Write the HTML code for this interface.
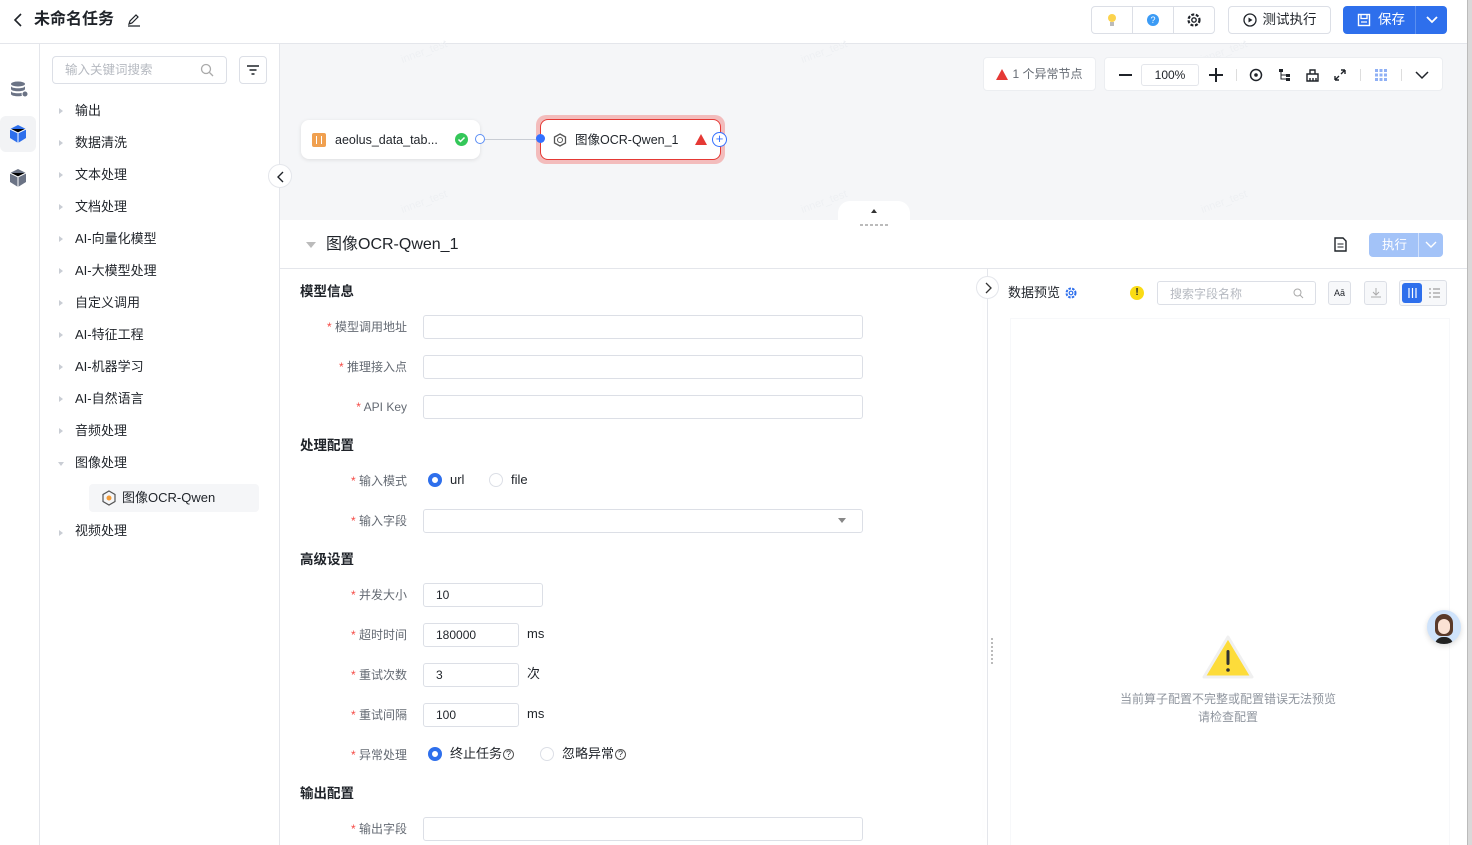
<!DOCTYPE html>
<html><head><meta charset="utf-8"><style>
*{box-sizing:border-box;margin:0;padding:0}
body{width:1472px;height:845px;overflow:hidden;font-family:"Liberation Sans","Noto Sans CJK SC",sans-serif;color:#1f2329;background:#fff;position:relative;font-size:13px;line-height:16px}
.abs{position:absolute}
.hdr{left:0;top:0;width:1467px;height:44px;border-bottom:1px solid #e4e6eb;background:#fff}
.btn{position:absolute;border:1px solid #dcdfe6;border-radius:4px;background:#fff;display:flex;align-items:center;justify-content:center}
.rail{left:0;top:44px;width:40px;height:801px;border-right:1px solid #e4e6eb;background:#fff}
.side{left:40px;top:44px;width:240px;height:801px;border-right:1px solid #e4e6eb;background:#fff}
.tree{position:absolute;left:35px;font-size:13px;color:#1f2329}
.tri{position:absolute;left:19px;width:0;height:0;border-top:3.5px solid transparent;border-bottom:3.5px solid transparent;border-left:4px solid #c9cdd4}
.canvas{left:280px;top:44px;width:1187px;height:176px;background:#f5f6f8}
.node{position:absolute;background:#fff;border-radius:8px;box-shadow:0 1px 4px rgba(0,0,0,.1);display:flex;align-items:center;font-size:12.5px}
.lbl{position:absolute;width:120px;text-align:right;font-size:12px;color:#646a73}
.lbl:before{content:"* ";color:#f54a45}
.inp{position:absolute;border:1px solid #dcdfe6;border-radius:3px;height:24px;font-size:12px;padding-left:12px;line-height:22px;background:#fff}
.sec{position:absolute;left:300px;font-weight:bold;font-size:13.5px}
.radio{position:absolute;width:14px;height:14px;border-radius:50%;border:1px solid #dcdfe6;background:#fff}
.radio.on{border:4px solid #2e6fec}
.wm{position:absolute;color:#eef0f3;font-size:11px;transform:rotate(-20deg)}
</style></head><body>

<div class="abs hdr">
  <svg class="abs" style="left:12px;top:12px" width="12" height="16"><path d="M9 2L3 8l6 6" stroke="#1f2329" stroke-width="1.6" fill="none"/></svg>
  <div class="abs" style="left:34px;top:11px;font-size:16px;font-weight:bold;line-height:18px">未命名任务</div>
  <svg class="abs" style="left:126px;top:12px" width="16" height="16"><path d="M3 12l1-3 6-6 2 2-6 6z M2 14h12" stroke="#1f2329" stroke-width="1.2" fill="none"/></svg>
  <div class="btn" style="left:1091px;top:6px;width:124px;height:28px;justify-content:flex-start">
    <div style="width:41px;height:26px;border-right:1px solid #dcdfe6;display:flex;align-items:center;justify-content:center"><svg width="12" height="14"><circle cx="6" cy="5" r="4" fill="#fcd34d"/><rect x="4" y="9" width="4" height="4" fill="#bbb"/></svg></div>
    <div style="width:41px;height:26px;border-right:1px solid #dcdfe6;display:flex;align-items:center;justify-content:center"><div style="width:12px;height:12px;border-radius:50%;background:#3b9bf5;color:#fff;font-size:9px;text-align:center;line-height:12px">?</div></div>
    <div style="width:40px;height:26px;display:flex;align-items:center;justify-content:center"><svg width="16" height="16"><circle cx="8" cy="8" r="5.5" stroke="#1f2329" stroke-width="2.2" fill="none" stroke-dasharray="3 1.6"/><circle cx="8" cy="8" r="2.2" stroke="#1f2329" stroke-width="1.4" fill="none"/></svg></div>
  </div>
  <div class="btn" style="left:1228px;top:6px;width:103px;height:28px;font-size:13.5px"><svg width="14" height="14" style="margin-right:6px"><circle cx="7" cy="7" r="6" stroke="#1f2329" stroke-width="1.3" fill="none"/><path d="M5.5 4.5v5l4-2.5z" fill="#1f2329"/></svg>测试执行</div>
  <div class="abs" style="left:1343px;top:6px;width:104px;height:28px;background:#2e6fec;border-radius:4px;color:#fff;font-size:13.5px">
    <svg class="abs" style="left:14px;top:7px" width="14" height="14"><rect x="1.5" y="1.5" width="11" height="11" stroke="#fff" stroke-width="1.4" fill="none"/><path d="M4 1.5v4h6v-4M4 9h6" stroke="#fff" stroke-width="1.3" fill="none"/></svg>
    <span class="abs" style="left:35px;top:6px">保存</span>
    <div class="abs" style="left:72px;top:0;width:1px;height:28px;background:#5a8ff0"></div>
    <svg class="abs" style="left:82px;top:9px" width="14" height="10"><path d="M2 2l5 5 5-5" stroke="#fff" stroke-width="1.8" fill="none"/></svg>
  </div>
</div>
<div class="abs" style="left:1467px;top:0;width:5px;height:845px;background:#d9d9d9;border-left:1px solid #bbb"></div>

<div class="abs rail">
  <svg class="abs" style="left:10px;top:36px" width="18" height="18"><ellipse cx="8" cy="4" rx="7" ry="2.5" fill="#6b7385"/><path d="M1 6c0 3 14 3 14 0v3c0 3-14 3-14 0zM1 11c0 3 14 3 14 0v3c0 3-14 3-14 0z" fill="#6b7385"/><circle cx="15" cy="14" r="3" fill="#6b7385" stroke="#fff"/></svg>
  <div class="abs" style="left:0;top:72px;width:36px;height:36px;background:#f2f3f5;border-radius:6px"></div>
  <svg class="abs" style="left:9px;top:80px" width="18" height="20"><path d="M9 1l8 4v9l-8 5-8-5V5z" fill="#2e6fec"/><path d="M1 5l8 4 8-4M9 9v10" stroke="#fff" stroke-width="1"/></svg>
  <svg class="abs" style="left:9px;top:124px" width="18" height="20"><path d="M9 1l8 4v9l-8 5-8-5V5z" fill="#6b7385"/><path d="M1 5l8 4 8-4M9 9v10" stroke="#fff" stroke-width="1"/></svg>
</div>

<div class="abs side">
  <div class="abs" style="left:12px;top:12px;width:175px;height:28px;border:1px solid #dcdfe6;border-radius:4px;color:#b5b9c0;font-size:12.5px;padding:5px 0 0 12px">输入关键词搜索
    <svg class="abs" style="left:147px;top:6px" width="14" height="14"><circle cx="6" cy="6" r="4.5" stroke="#aaa" stroke-width="1.3" fill="none"/><path d="M9.5 9.5l3.5 3.5" stroke="#aaa" stroke-width="1.3"/></svg></div>
  <div class="abs" style="left:199px;top:12px;width:28px;height:28px;border:1px solid #dcdfe6;border-radius:4px"><svg class="abs" style="left:6px;top:7px" width="14" height="12"><path d="M1 2h12M3.5 6h7M5.5 10h3" stroke="#1f2329" stroke-width="1.6"/></svg></div>
  <div class="tri" style="top:64px"></div><div class="tree" style="top:59px">输出</div>
  <div class="tri" style="top:96px"></div><div class="tree" style="top:91px">数据清洗</div>
  <div class="tri" style="top:128px"></div><div class="tree" style="top:123px">文本处理</div>
  <div class="tri" style="top:160px"></div><div class="tree" style="top:155px">文档处理</div>
  <div class="tri" style="top:192px"></div><div class="tree" style="top:187px">AI-向量化模型</div>
  <div class="tri" style="top:224px"></div><div class="tree" style="top:219px">AI-大模型处理</div>
  <div class="tri" style="top:256px"></div><div class="tree" style="top:251px">自定义调用</div>
  <div class="tri" style="top:288px"></div><div class="tree" style="top:283px">AI-特征工程</div>
  <div class="tri" style="top:320px"></div><div class="tree" style="top:315px">AI-机器学习</div>
  <div class="tri" style="top:352px"></div><div class="tree" style="top:347px">AI-自然语言</div>
  <div class="tri" style="top:384px"></div><div class="tree" style="top:379px">音频处理</div>
  <div class="abs" style="left:18px;top:418px;width:0;height:0;border-left:3.5px solid transparent;border-right:3.5px solid transparent;border-top:4px solid #c9cdd4"></div><div class="tree" style="top:411px">图像处理</div>
  <div class="abs" style="left:49px;top:440px;width:170px;height:28px;background:#f5f6f8;border-radius:4px"></div>
  <svg class="abs" style="left:62px;top:446px" width="14" height="16"><path d="M7 1l6 3.5v7L7 15l-6-3.5v-7z" stroke="#555" stroke-width="1.2" fill="none"/><circle cx="7" cy="8" r="2.5" fill="#f29b38"/></svg>
  <div class="tree" style="left:82px;top:446px">图像OCR-Qwen</div>
  <div class="tri" style="top:486px"></div><div class="tree" style="top:479px">视频处理</div>
</div>

<div class="abs canvas">
  <div class="wm" style="left:120px;top:0">inner_test</div><div class="wm" style="left:520px;top:0">inner_test</div><div class="wm" style="left:920px;top:0">inner_test</div>
  <div class="wm" style="left:120px;top:150px">inner_test</div><div class="wm" style="left:520px;top:150px">inner_test</div><div class="wm" style="left:920px;top:150px">inner_test</div>
  <div class="btn" style="left:703px;top:13px;width:113px;height:34px;border-color:#eceef1;font-size:12px;color:#646a73"><svg width="12" height="11" style="margin-right:4px"><path d="M6 0l6 11H0z" fill="#e53935"/></svg>1 个异常节点</div>
  <div class="btn" style="left:824px;top:13px;width:339px;height:34px;border-color:#eceef1;justify-content:flex-start">
    <div class="abs" style="left:14px;top:16px;width:13px;height:2px;background:#1f2329"></div>
    <div class="abs" style="left:36px;top:6px;width:58px;height:22px;border:1px solid #e4e6eb;border-radius:3px;font-size:12px;text-align:center;line-height:20px">100%</div>
    <div class="abs" style="left:104px;top:16px;width:14px;height:2px;background:#1f2329"></div><div class="abs" style="left:110px;top:10px;width:2px;height:14px;background:#1f2329"></div>
    <div class="abs" style="left:131px;top:11px;width:1px;height:12px;background:#ddd"></div>
    <svg class="abs" style="left:144px;top:10px" width="14" height="14"><circle cx="7" cy="7" r="5.5" stroke="#1f2329" stroke-width="1.5" fill="none"/><circle cx="7" cy="7" r="1.8" fill="#1f2329"/></svg>
    <svg class="abs" style="left:173px;top:10px" width="13" height="14"><rect x="1" y="1" width="4" height="3" fill="#1f2329"/><rect x="8" y="6" width="4" height="3" fill="#1f2329"/><rect x="8" y="10" width="4" height="3" fill="#1f2329"/><path d="M3 4v7h5M3 7h5" stroke="#1f2329" fill="none"/></svg>
    <svg class="abs" style="left:200px;top:10px" width="15" height="14"><path d="M2 6h11v7H2zM5 6V2h5v4M5 10v3M8 10v3M11 10v3" stroke="#1f2329" stroke-width="1.4" fill="none"/></svg>
    <svg class="abs" style="left:229px;top:11px" width="12" height="12"><path d="M1 11l4-4M11 1L7 5M1 11V7M1 11h4M11 1v4M11 1H7" stroke="#1f2329" stroke-width="1.4" fill="none"/></svg>
    <div class="abs" style="left:255px;top:11px;width:1px;height:12px;background:#ddd"></div>
    <svg class="abs" style="left:270px;top:11px" width="12" height="12"><g fill="#8fb0f5"><rect x="0" y="0" width="3" height="3"/><rect x="4.5" y="0" width="3" height="3"/><rect x="9" y="0" width="3" height="3"/><rect x="0" y="4.5" width="3" height="3"/><rect x="4.5" y="4.5" width="3" height="3"/><rect x="9" y="4.5" width="3" height="3"/><rect x="0" y="9" width="3" height="3"/><rect x="4.5" y="9" width="3" height="3"/><rect x="9" y="9" width="3" height="3"/></g></svg>
    <div class="abs" style="left:296px;top:11px;width:1px;height:12px;background:#ddd"></div>
    <svg class="abs" style="left:310px;top:12px" width="14" height="10"><path d="M1 2l6 6 6-6" stroke="#1f2329" stroke-width="1.5" fill="none"/></svg>
  </div>
  <div class="node" style="left:21px;top:76px;width:179px;height:39px">
    <div style="margin-left:11px;width:14px;height:14px;background:#f0a050;border-radius:2px;position:relative"><div style="position:absolute;left:4px;top:3px;width:6px;height:8px;border-left:1px solid #fff;border-right:1px solid #fff"></div></div>
    <span style="margin-left:9px">aeolus_data_tab...</span>
    <div class="abs" style="left:154px;top:13px;width:13px;height:13px;border-radius:50%;background:#34c759"><svg width="13" height="13"><path d="M3.5 6.5l2 2 4-4" stroke="#fff" stroke-width="1.5" fill="none"/></svg></div>
  </div>
  <div class="abs" style="left:195px;top:90px;width:10px;height:10px;border-radius:50%;border:1.5px solid #5b8ef5;background:#fff"></div>
  <div class="abs" style="left:205px;top:95px;width:55px;height:1px;background:#c9cdd4"></div>
  <div class="abs" style="left:256px;top:71px;width:189px;height:49px;border-radius:10px;background:#f3bcbc"></div>
  <div class="node" style="left:260px;top:75px;width:181px;height:41px;border:1.5px solid #e53935;box-shadow:none">
    <svg style="margin-left:12px" width="14" height="14"><path d="M7 1l5.5 3v6L7 13 1.5 10V4z" stroke="#555" stroke-width="1.3" fill="none"/><circle cx="7" cy="7" r="2.5" stroke="#555" fill="none"/></svg>
    <span style="margin-left:8px">图像OCR-Qwen_1</span>
    <svg class="abs" style="left:154px;top:14px" width="12" height="11"><path d="M6 0l6 11H0z" fill="#e53935"/></svg>
  </div>
  <div class="abs" style="left:256px;top:90px;width:9px;height:9px;border-radius:50%;background:#3370ff"></div>
  <div class="abs" style="left:432px;top:88px;width:15px;height:15px;border-radius:50%;border:1.3px solid #3370ff;background:#fff;color:#3370ff;font-size:13px;line-height:12px;text-align:center">+</div>
  <div class="abs" style="left:558px;top:157px;width:72px;height:22px;border-radius:12px 12px 0 0;background:#fff"></div>
  <div class="abs" style="left:591px;top:165px;width:0;height:0;border-left:3px solid transparent;border-right:3px solid transparent;border-bottom:4px solid #333"></div>
</div>
<div class="abs" style="left:268px;top:164px;width:24px;height:24px;border-radius:50%;background:#fff;border:1px solid #e4e6eb"><svg class="abs" style="left:7px;top:6px" width="10" height="12"><path d="M7 1L2 6l5 5" stroke="#1f2329" stroke-width="1.4" fill="none"/></svg></div>
<div class="abs" style="left:860px;top:224px;width:28px;height:2px;background:repeating-linear-gradient(90deg,#bbb 0 3px,transparent 3px 5px)"></div>

<div class="abs" style="left:306px;top:242px;width:0;height:0;border-left:5px solid transparent;border-right:5px solid transparent;border-top:6px solid #bbb"></div>
<div class="abs" style="left:326px;top:236px;font-size:16px;line-height:18px">图像OCR-Qwen_1</div>
<svg class="abs" style="left:1334px;top:237px" width="13" height="15"><path d="M1 1h8l3 3v10H1z" stroke="#1f2329" stroke-width="1.4" fill="none"/><path d="M3.5 7h6M3.5 10h6" stroke="#1f2329"/></svg>
<div class="abs" style="left:1369px;top:233px;width:74px;height:24px;background:#a3c3f8;border-radius:4px;color:#fff;font-size:12.5px">
  <span class="abs" style="left:13px;top:4px">执行</span><div class="abs" style="left:49px;top:0;width:1px;height:24px;background:#fff;opacity:.5"></div>
  <svg class="abs" style="left:56px;top:8px" width="12" height="8"><path d="M1 1l5 5 5-5" stroke="#fff" stroke-width="1.4" fill="none"/></svg>
</div>
<div class="abs" style="left:280px;top:268px;width:1187px;height:1px;background:#e4e6eb"></div>

<div class="sec" style="top:284px">模型信息</div>
<div class="lbl" style="left:287px;top:319px">模型调用地址</div><div class="inp" style="left:423px;top:315px;width:440px"></div>
<div class="lbl" style="left:287px;top:359px">推理接入点</div><div class="inp" style="left:423px;top:355px;width:440px"></div>
<div class="lbl" style="left:287px;top:399px">API Key</div><div class="inp" style="left:423px;top:395px;width:440px"></div>
<div class="sec" style="top:438px">处理配置</div>
<div class="lbl" style="left:287px;top:473px">输入模式</div>
<div class="radio on" style="left:428px;top:473px"></div><div class="abs" style="left:450px;top:472px">url</div>
<div class="radio" style="left:489px;top:473px"></div><div class="abs" style="left:511px;top:472px">file</div>
<div class="lbl" style="left:287px;top:513px">输入字段</div><div class="inp" style="left:423px;top:509px;width:440px"></div>
<div class="abs" style="left:838px;top:518px;width:0;height:0;border-left:4px solid transparent;border-right:4px solid transparent;border-top:5px solid #888"></div>
<div class="sec" style="top:552px">高级设置</div>
<div class="lbl" style="left:287px;top:587px">并发大小</div><div class="inp" style="left:423px;top:583px;width:120px">10</div>
<div class="lbl" style="left:287px;top:627px">超时时间</div><div class="inp" style="left:423px;top:623px;width:96px">180000</div><div class="abs" style="left:527px;top:626px">ms</div>
<div class="lbl" style="left:287px;top:667px">重试次数</div><div class="inp" style="left:423px;top:663px;width:96px">3</div><div class="abs" style="left:527px;top:666px">次</div>
<div class="lbl" style="left:287px;top:707px">重试间隔</div><div class="inp" style="left:423px;top:703px;width:96px">100</div><div class="abs" style="left:527px;top:706px">ms</div>
<div class="lbl" style="left:287px;top:747px">异常处理</div>
<div class="radio on" style="left:428px;top:747px"></div><div class="abs" style="left:450px;top:746px">终止任务<span style="font-size:9px;border:1px solid #555;border-radius:50%;display:inline-block;width:11px;height:11px;line-height:9px;text-align:center;margin-left:1px;vertical-align:1px">?</span></div>
<div class="radio" style="left:540px;top:747px"></div><div class="abs" style="left:562px;top:746px">忽略异常<span style="font-size:9px;border:1px solid #555;border-radius:50%;display:inline-block;width:11px;height:11px;line-height:9px;text-align:center;margin-left:1px;vertical-align:1px">?</span></div>
<div class="sec" style="top:786px">输出配置</div>
<div class="lbl" style="left:287px;top:821px">输出字段</div><div class="inp" style="left:423px;top:817px;width:440px"></div>

<div class="abs" style="left:987px;top:269px;width:1px;height:576px;background:#e4e6eb;box-shadow:-4px 0 8px rgba(0,0,0,.04)"></div>
<div class="abs" style="left:976px;top:276px;width:23px;height:23px;border-radius:50%;background:#fff;border:1px solid #e4e6eb"><svg class="abs" style="left:7px;top:5px" width="9" height="12"><path d="M2 1l5 5-5 5" stroke="#333" stroke-width="1.3" fill="none"/></svg></div>
<div class="abs" style="left:1008px;top:285px;font-size:13px">数据预览</div>
<svg class="abs" style="left:1064px;top:286px" width="14" height="14"><circle cx="7" cy="7" r="4.5" stroke="#2e6fec" stroke-width="2" fill="none" stroke-dasharray="2.5 1.2"/><circle cx="7" cy="7" r="1.8" stroke="#2e6fec" stroke-width="1.2" fill="none"/></svg>
<div class="abs" style="left:1130px;top:286px;width:14px;height:14px;border-radius:50%;background:#fadb14;font-size:10px;font-weight:bold;text-align:center;line-height:14px">!</div>
<div class="abs" style="left:1157px;top:281px;width:159px;height:24px;border:1px solid #dcdfe6;border-radius:3px;color:#b5b9c0;font-size:12px;padding:4px 0 0 12px">搜索字段名称
  <svg class="abs" style="left:135px;top:6px" width="11" height="11"><circle cx="4.5" cy="4.5" r="3.5" stroke="#aaa" fill="none"/><path d="M7 7l3 3" stroke="#aaa"/></svg></div>
<div class="abs" style="left:1328px;top:281px;width:23px;height:24px;border:1px solid #dcdfe6;border-radius:3px;background:#f7f8fa;font-size:9px;text-align:center;line-height:22px">Aā</div>
<div class="abs" style="left:1364px;top:281px;width:23px;height:24px;border:1px solid #dcdfe6;border-radius:3px;background:#f7f8fa"><svg class="abs" style="left:5px;top:5px" width="12" height="12"><path d="M6 1v7M3 5l3 3 3-3M1 10h10" stroke="#aaa" fill="none"/></svg></div>
<div class="abs" style="left:1399px;top:280px;width:48px;height:26px;border:1px solid #dcdfe6;border-radius:3px;background:#f7f8fa">
  <div class="abs" style="left:2px;top:2px;width:20px;height:20px;background:#2e6fec;border-radius:3px"><svg class="abs" style="left:6px;top:5px" width="9" height="10"><path d="M1 0v10M4.5 0v10M8 0v10" stroke="#fff" stroke-width="1.2"/></svg></div>
  <svg class="abs" style="left:29px;top:7px" width="11" height="10"><path d="M0 1h2M0 5h2M0 9h2M4 1h7M4 5h7M4 9h7" stroke="#888"/></svg>
</div>
<div class="abs" style="left:1010px;top:318px;width:440px;height:527px;border:1px solid #f7f8fa;border-bottom:none"></div>
<div class="abs" style="left:991px;top:638px;width:2px;height:28px;background:repeating-linear-gradient(180deg,#bbb 0 2px,transparent 2px 4px)"></div>
<svg class="abs" style="left:1202px;top:634px" width="52" height="46"><path d="M26 3L50 43H2z" fill="#fddc3a" stroke="#f0f0f0" stroke-width="3" stroke-linejoin="round"/><rect x="24.5" y="16" width="3" height="15" rx="1.5" fill="#333"/><circle cx="26" cy="36" r="1.8" fill="#333"/></svg>
<div class="abs" style="left:1100px;top:690px;width:256px;text-align:center;color:#8f959e;font-size:12px;line-height:18px">当前算子配置不完整或配置错误无法预览<br>请检查配置</div>
<div class="abs" style="left:1427px;top:610px;width:34px;height:34px;border-radius:50%;background:#cfe3fb;box-shadow:0 2px 6px rgba(0,0,0,.15);overflow:hidden">
  <div class="abs" style="left:8px;top:4px;width:18px;height:22px;border-radius:9px 9px 6px 6px;background:#5a3a2a"></div>
  <div class="abs" style="left:11px;top:9px;width:12px;height:15px;border-radius:6px;background:#fbe2d4"></div>
  <div class="abs" style="left:8px;top:27px;width:18px;height:10px;border-radius:8px 8px 0 0;background:#222"></div>
</div>
</body></html>
